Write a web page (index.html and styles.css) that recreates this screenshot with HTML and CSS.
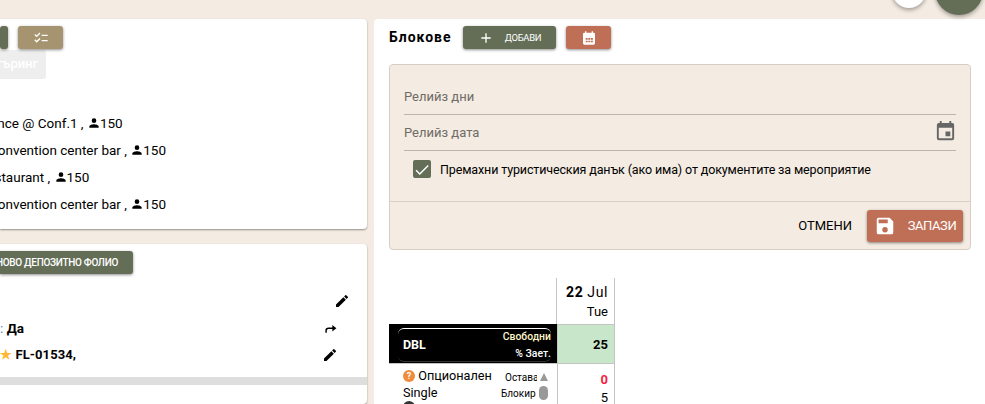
FILE: index.html
```html
<!DOCTYPE html>
<html lang="bg">
<head>
    <meta charset="UTF-8">
    <meta name="viewport" content="width=device-width, initial-scale=1.0">
    <title>Блокове</title>
    <link rel="stylesheet" href="styles.css">
</head>
<body>
    <div class="fab fab-white"></div>
    <div class="fab fab-green"></div>

    <main class="page">
        <div class="left-col">
            <section class="card card-events">
                <div class="btn-row">
                    <button class="btn btn-green btn-cut"></button>
                    <button class="btn btn-tan">
                        <svg class="icon-sm" viewBox="0 0 24 24"><path d="M22 7h-9v2h9V7zm0 8h-9v2h9v-2zM5.54 11 2 7.46l1.41-1.41 2.12 2.12 4.24-4.24 1.41 1.41L5.54 11zm0 8L2 15.46l1.41-1.41 2.12 2.12 4.24-4.24 1.41 1.41L5.54 19z"/></svg>
                    </button>
                </div>
                <div class="btn-disabled">Кетъринг</div>
                <ul class="event-list">
                    <li class="ev-1">Conference @ Conf.1 , <svg class="person" viewBox="0 0 24 24"><path d="M12 12a4 4 0 1 0 0-8 4 4 0 0 0 0 8zm0 2c-2.7 0-8 1.3-8 4v2h16v-2c0-2.7-5.3-4-8-4z"/></svg>150</li>
                    <li class="ev-2">Convention center bar , <svg class="person" viewBox="0 0 24 24"><path d="M12 12a4 4 0 1 0 0-8 4 4 0 0 0 0 8zm0 2c-2.7 0-8 1.3-8 4v2h16v-2c0-2.7-5.3-4-8-4z"/></svg>150</li>
                    <li class="ev-3">Restaurant , <svg class="person" viewBox="0 0 24 24"><path d="M12 12a4 4 0 1 0 0-8 4 4 0 0 0 0 8zm0 2c-2.7 0-8 1.3-8 4v2h16v-2c0-2.7-5.3-4-8-4z"/></svg>150</li>
                    <li class="ev-2">Convention center bar , <svg class="person" viewBox="0 0 24 24"><path d="M12 12a4 4 0 1 0 0-8 4 4 0 0 0 0 8zm0 2c-2.7 0-8 1.3-8 4v2h16v-2c0-2.7-5.3-4-8-4z"/></svg>150</li>
                </ul>
            </section>

            <section class="card card-folio">
                <button class="btn btn-green btn-folio">Ново депозитно фолио</button>
                <div class="folio-row folio-first">
                    <svg class="icon-md" viewBox="0 0 24 24"><path d="M3 17.25V21h3.75L17.81 9.94l-3.75-3.75L3 17.25zM20.71 7.04a1 1 0 0 0 0-1.41l-2.34-2.34a1 1 0 0 0-1.41 0l-1.83 1.83 3.75 3.75 1.83-1.83z"/></svg>
                </div>
                <div class="folio-row">
                    <span class="folio-text ft-yes"><span class="ft-muted">:</span> Да</span>
                    <svg class="icon-redo" viewBox="0 0 24 24"><path d="M4 20v-3.500A5.500 5.500 0 0 1 9.500 11H16V7l7 5.500-7 5.500v-4.500H9.500a3 3 0 0 0-3 3V20z"/></svg>
                </div>
                <div class="folio-row">
                    <span class="folio-text ft-fl"><span class="star">★</span> FL-01534,</span>
                    <svg class="icon-md" viewBox="0 0 24 24"><path d="M3 17.25V21h3.75L17.81 9.94l-3.75-3.75L3 17.25zM20.71 7.04a1 1 0 0 0 0-1.41l-2.34-2.34a1 1 0 0 0-1.41 0l-1.83 1.83 3.75 3.75 1.83-1.83z"/></svg>
                </div>
                <div class="grey-bar"></div>
            </section>
        </div>

        <section class="right-col">
            <div class="blocks-head">
                <h2>Блокове</h2>
                <button class="btn btn-green btn-add">
                    <svg class="icon-plus" viewBox="0 0 24 24"><path d="M19 13h-6v6h-2v-6H5v-2h6V5h2v6h6v2z"/></svg>
                    <span>Добави</span>
                </button>
                <button class="btn btn-red btn-cal">
                    <svg class="icon-sm" viewBox="0 0 24 24"><path d="M19 4h-1V2h-2v2H8V2H6v2H5a2 2 0 0 0-2 2v14a2 2 0 0 0 2 2h14a2 2 0 0 0 2-2V6a2 2 0 0 0-2-2zM7 12h3v2.500H7V12zm0 4h3v2.500H7V16zm3.900-4h3v2.500h-3V12zm0 4h3v2.500h-3V16zm3.900-4h3v2.500h-3V12zm0 4h3v2.500h-3V16z"/></svg>
                </button>
            </div>

            <div class="panel">
                <div class="panel-body">
                    <div class="field">Релийз дни</div>
                    <div class="field">
                        Релийз дата
                        <svg class="field-icon" viewBox="0 0 24 24"><path d="M17 12h-5v5h5v-5zM16 1v2H8V1H6v2H5a2 2 0 0 0-2 2v14a2 2 0 0 0 2 2h14a2 2 0 0 0 2-2V5a2 2 0 0 0-2-2h-1V1h-2zm3 18H5V8h14v11z"/></svg>
                    </div>
                    <label class="check-row">
                        <span class="check">
                            <svg viewBox="0 0 24 24"><path d="M9 17.200 4.800 13l-1.400 1.400L9 20 21 8l-1.400-1.400z" fill="#fff"/></svg>
                        </span>
                        Премахни туристическия данък (ако има) от документите за мероприятие
                    </label>
                </div>
                <div class="panel-actions">
                    <button class="btn-text">Отмени</button>
                    <button class="btn btn-red btn-save">
                        <svg class="icon-save" viewBox="0 0 24 24"><path d="M17 3H5a2 2 0 0 0-2 2v14a2 2 0 0 0 2 2h14a2 2 0 0 0 2-2V7l-4-4zm-5 16a3 3 0 1 1 0-6 3 3 0 0 1 0 6zm3-10H5V5h10v4z"/></svg>
                        <span>Запази</span>
                    </button>
                </div>
            </div>

            <div class="grid-wrap">
                <div class="grid">
                    <div class="cell-blank"></div>
                    <div class="cell-date"><div class="date-main"><b>22</b> Jul</div><div class="weekday">Tue</div></div>

                    <div class="cell-room">
                        <div class="room-inner">
                            <span class="room-name">DBL</span>
                            <span class="room-legend"><span class="legend-free">Свободни</span><span>% Зает.</span></span>
                        </div>
                    </div>
                    <div class="cell-free">25</div>

                    <div class="cell-rate">
                        <div class="rate-name">
                            <span class="help">?</span> Опционален<br>Single<br><span class="help help-dark"></span>
                        </div>
                        <div class="rate-side">
                            <div class="side-row"><span class="side-label">Оставащи</span><span class="tri"></span></div>
                            <div class="side-row"><span class="side-label">Блокирани</span><span class="oval"></span></div>
                        </div>
                    </div>
                    <div class="cell-nums"><div class="num-red">0</div><div>5</div></div>
                </div>
            </div>
        </section>
    </main>
</body>
</html>
```
FILE: styles.css
```css
* {
    box-sizing: border-box;
}

html, body {
    height: 100%;
}

body {
    margin: 0;
    overflow: hidden;
    font-family: Roboto, Arial, sans-serif;
    font-size: 14px;
    color: #000;
    background-color: #f4ece2;
}

button {
    font-family: inherit;
    border: 0;
    padding: 0;
}

svg {
    display: block;
    fill: currentColor;
}

.fab {
    position: absolute;
    border-radius: 50%;
    box-shadow: 0 2px 4px rgba(0, 0, 0, 0.35);
}

.fab-white {
    left: 892px;
    top: -26px;
    width: 34px;
    height: 34px;
    background-color: #fff;
}

.fab-green {
    left: 935px;
    top: -33px;
    width: 48px;
    height: 48px;
    background-color: #646e57;
}

.page {
    display: flex;
    height: 100%;
    padding-top: 19px;
    gap: 7px;
}

.left-col {
    width: 367px;
    flex: none;
    display: flex;
    flex-direction: column;
    gap: 15px;
}

.card {
    background-color: #fff;
    border-radius: 0 4px 4px 0;
    box-shadow: 0 1px 2px rgba(0, 0, 0, 0.4);
    overflow: hidden;
}

.card-events {
    height: 210px;
    padding-top: 7px;
}

.btn {
    display: flex;
    align-items: center;
    justify-content: center;
    color: #fff;
    border-radius: 3px;
    box-shadow: 0 1px 3px rgba(0, 0, 0, 0.45);
}

.btn-green {
    background-color: #646e57;
}

.btn-tan {
    background-color: #a69470;
}

.btn-red {
    background-color: #bf6f56;
}

.btn-row {
    display: flex;
    gap: 10px;
    height: 23px;
}

.btn-cut {
    width: 8px;
}

.btn-tan {
    width: 45px;
}

.icon-sm {
    width: 16px;
    height: 16px;
}

.btn-disabled {
    width: 46px;
    height: 29px;
    margin-top: 1px;
    background-color: #eee;
    border-radius: 0 3px 3px 0;
    color: #fff;
    font-size: 13px;
    font-weight: 500;
    line-height: 27px;
    white-space: nowrap;
    overflow: hidden;
    direction: rtl;
    padding-right: 8px;
}

.event-list {
    list-style: none;
    margin: 30px 0 0;
    padding: 0;
    font-size: 13.5px;
}

.event-list li {
    display: flex;
    align-items: center;
    height: 27px;
    white-space: pre;
}

.ev-1 {
    margin-left: -50px;
}

.ev-2 {
    margin-left: -11px;
}

.ev-3 {
    margin-left: -21px;
}

.person {
    width: 14px;
    height: 14px;
    margin-right: -1px;
}

.card-folio {
    flex: 1;
    padding-top: 7px;
}

.btn-folio {
    width: 133px;
    height: 23px;
    justify-content: flex-end;
    padding-right: 15px;
    font-size: 10px;
    font-weight: 500;
    letter-spacing: -0.3px;
    text-transform: uppercase;
    white-space: nowrap;
    overflow: hidden;
    border-radius: 0 3px 3px 0;
}

.folio-row {
    display: flex;
    justify-content: space-between;
    align-items: center;
    height: 27px;
    padding-right: 29px;
    white-space: nowrap;
}

.folio-first {
    margin-top: 13px;
    justify-content: flex-end;
    padding-right: 17px;
}

.folio-text {
    font-size: 13px;
    font-weight: 700;
}

.ft-yes {
    font-size: 13.5px;
}

.ft-fl {
    letter-spacing: 0.1px;
}

.ft-muted {
    color: #4a90c0;
    font-weight: 400;
}

.star {
    color: #fdb835;
}

.icon-md {
    width: 16px;
    height: 16px;
}

.icon-redo {
    width: 14px;
    height: 14px;
    margin-right: 1px;
}

.grey-bar {
    height: 8px;
    margin-top: 9px;
    background-color: #dedede;
}

.right-col {
    flex: 1;
    min-width: 0;
    padding: 7px 14px 0 15px;
    background-color: #fff;
    border-radius: 4px 0 0 0;
}

.blocks-head {
    display: flex;
    align-items: center;
    height: 23px;
}

.blocks-head h2 {
    margin: -2px 12px 0 0;
    width: 62px;
    font-size: 14px;
    font-weight: 700;
    letter-spacing: 1px;
    white-space: nowrap;
}

.btn-add {
    width: 93px;
    height: 23px;
    gap: 11px;
    font-size: 9.5px;
    letter-spacing: -0.3px;
    text-transform: uppercase;
}

.icon-plus {
    width: 16px;
    height: 16px;
}

.btn-cal {
    width: 45px;
    height: 23px;
    margin-left: 10px;
}

.panel {
    margin-top: 15px;
    height: 186px;
    background-color: #f4ece2;
    border: 1px solid #d6cdc3;
    border-radius: 4px;
}

.panel-body {
    height: 137px;
    padding: 14px 14px 0;
    border-bottom: 1px solid #d9d0c7;
}

.field {
    display: flex;
    align-items: center;
    justify-content: space-between;
    height: 36px;
    color: #6f6b66;
    font-size: 13px;
    border-bottom: 1px solid #bdb4aa;
}

.field-icon {
    width: 23px;
    height: 23px;
    margin-right: -1px;
    margin-bottom: 3px;
    color: #666;
}

.check-row {
    display: flex;
    align-items: center;
    gap: 9px;
    margin-top: 9px;
    padding-left: 9px;
    font-size: 12.5px;
    letter-spacing: -0.13px;
    white-space: nowrap;
}

.check {
    width: 18px;
    height: 18px;
    border-radius: 2px;
    background-color: #646e57;
}

.panel-actions {
    display: flex;
    align-items: center;
    justify-content: flex-end;
    gap: 15px;
    height: 47px;
    padding-right: 7px;
}

.btn-text {
    background: none;
    font-size: 13px;
    text-transform: uppercase;
}

.btn-save {
    width: 96px;
    height: 32px;
    gap: 12px;
    font-size: 13px;
    letter-spacing: -0.4px;
    text-transform: uppercase;
}

.icon-save {
    width: 22px;
    height: 22px;
}

.grid-wrap {
    margin-top: 28px;
}

.grid {
    display: grid;
    grid-template-columns: 168px 58px;
    grid-template-rows: 46px 39px auto;
    width: 226px;
}

.cell-blank {
    border-right: 1px solid #c4c4c4;
}

.cell-date {
    padding: 5px 6px 0 0;
    text-align: right;
    border-right: 1px solid #c4c4c4;
    line-height: 19px;
}

.date-main {
    letter-spacing: 0.6px;
}

.weekday {
    font-size: 13px;
}

.cell-room {
    padding: 4px 6px 1px 9px;
    background-color: #000;
    color: #fff;
}

.room-inner {
    display: flex;
    justify-content: space-between;
    align-items: center;
    height: 100%;
    padding-left: 5px;
    border-top: 1px solid #fff;
    border-bottom: 1px solid #333;
    border-radius: 6px;
}

.room-name {
    margin-bottom: 2px;
    font-size: 12.5px;
    font-weight: 700;
}

.room-legend {
    display: flex;
    flex-direction: column;
    align-items: flex-end;
    gap: 4px;
    font-size: 10.4px;
    font-weight: 500;
}

.legend-free {
    color: #fff6c8;
}

.cell-free {
    display: flex;
    align-items: center;
    justify-content: flex-end;
    padding-right: 6px;
    font-size: 13px;
    font-weight: 700;
    background-color: #c8e6c9;
    border: 1px solid #c4c4c4;
    border-bottom: 0;
}

.cell-rate {
    display: flex;
    justify-content: space-between;
    padding: 3px 9px 0 14px;
    height: 60px;
    overflow: hidden;
    border-top: 1px solid #c4c4c4;
}

.rate-name {
    font-size: 12.7px;
    line-height: 17px;
}

.help {
    display: inline-block;
    width: 12px;
    height: 12px;
    border-radius: 50%;
    background-color: #f08a3c;
    color: #fff;
    font-size: 9px;
    font-weight: 700;
    line-height: 12px;
    text-align: center;
    vertical-align: 1px;
}

.help-dark {
    background-color: #333;
}

.rate-side {
    display: flex;
    flex-direction: column;
    align-items: flex-end;
    gap: 2px;
    padding-top: 3px;
    font-size: 10px;
}

.side-row {
    display: flex;
    align-items: center;
    gap: 3px;
    height: 14px;
}

.side-label {
    width: 35px;
    overflow: hidden;
    white-space: nowrap;
}

.side-row:first-child .side-label {
    width: 32px;
}

.tri {
    width: 0;
    height: 0;
    border-left: 4.5px solid transparent;
    border-right: 4.5px solid transparent;
    border-bottom: 8px solid #999;
}

.oval {
    width: 9px;
    height: 14px;
    border-radius: 5px;
    background-color: #999;
}

.cell-nums {
    padding: 7px 6px 0 0;
    text-align: right;
    line-height: 18px;
    font-size: 13px;
    border: 1px solid #c4c4c4;
    border-bottom: 0;
}

.num-red {
    color: #f5223f;
    font-weight: 700;
}
```
